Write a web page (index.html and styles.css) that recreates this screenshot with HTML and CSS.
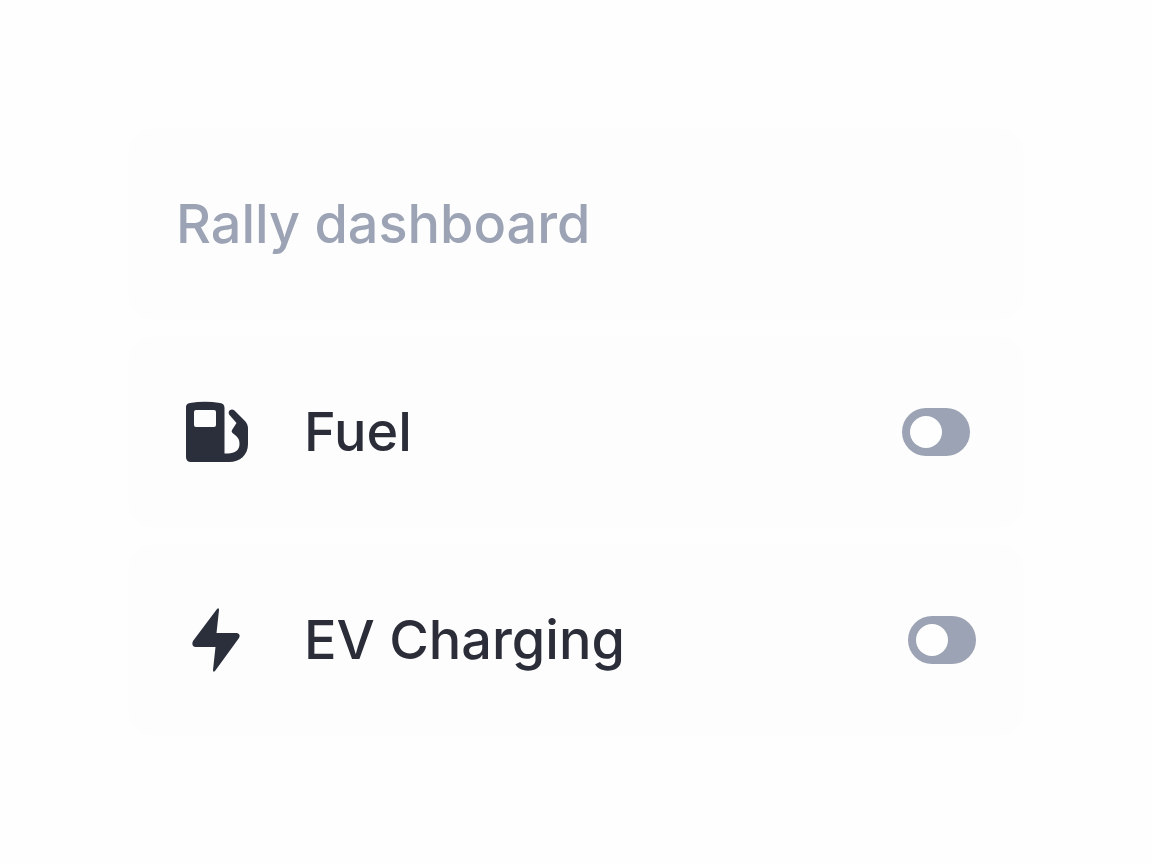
FILE: index.html
```html
<!doctype html>
<html lang="en">
<head>
  <title>Rally dashboard</title>
  <meta charset="utf-8">
  <meta name="viewport" content="width=device-width, initial-scale=1">
  <link rel="stylesheet" href="styles.css">
</head>
<body>
<main class="dashboard">
  <header class="card">
    <h1 class="title">Rally dashboard</h1>
  </header>

  <div class="card setting fuel">
    <svg class="icon" viewBox="0 0 64 64" aria-hidden="true">
      <path fill-rule="evenodd" d="M2 7Q2 3.500 6 3Q21 .5 36 3Q40.500 3.500 40.500 8V53.500H44C51 53.500 55.500 50 55.500 44C55.500 39 54 37 48.500 33Q47 31.500 48 30L52.500 23L45.500 15C43 11.500 47 7.500 50.500 10.500L61 21Q64 24 64 29V44C64 55 56 62 45 62H7Q2 62 2 57ZM12 10Q10 10 10 12V25Q10 27 12 27H30Q32 27 32 25V12Q32 10 30 10Z"/>
    </svg>
    <label class="name" for="fuel">Fuel</label>
    <input class="toggle" id="fuel" type="checkbox" role="switch">
  </div>

  <div class="card setting">
    <svg class="icon" viewBox="0 0 64 64" aria-hidden="true">
      <path d="M33 1Q35 -1 35 2L32.500 25H53Q57 26 55 30L31 63Q29 65 29 62L31.500 39H11Q7 38 9 33Z"/>
    </svg>
    <label class="name" for="ev-charging">EV Charging</label>
    <input class="toggle" id="ev-charging" type="checkbox" role="switch">
  </div>
</main>
</body>
</html>
```

FILE: styles.css
```css
body {
  margin: 0;
  background-color: #fefefe;
  color: #2b2d38;
  font-family: Inter, "Liberation Sans", sans-serif;
}

.dashboard {
  display: flex;
  flex-direction: column;
  gap: 16px;
  padding: 128px;
}

.card {
  display: flex;
  align-items: center;
  box-sizing: border-box;
  min-height: 192px;
  padding: 48px;
  border-radius: 28px;
  background-color: #fdfdfd;
}

.title, .name {
  margin: 0;
  font-size: 54px;
  font-weight: 500;
  line-height: 64px;
}

.title {
  color: #9ba3b4;
}

.setting {
  gap: 56px;
  padding-left: 56px;
}

.fuel {
  padding-right: 54px;
}

.icon {
  flex: none;
  width: 64px;
  height: 64px;
  fill: #2b2f3c;
}

.name {
  flex: 1;
}

.toggle {
  appearance: none;
  flex: none;
  box-sizing: border-box;
  width: 68px;
  height: 48px;
  margin: 0;
  padding: 8px;
  border-radius: 24px;
  background-color: #9ba3b4;
  cursor: pointer;
}

.toggle::before {
  content: "";
  display: block;
  width: 32px;
  height: 32px;
  border-radius: 50%;
  background-color: #fefefe;
}

.toggle:checked {
  background-color: #2b2f3c;
}

.toggle:checked::before {
  margin-left: auto;
}
```
